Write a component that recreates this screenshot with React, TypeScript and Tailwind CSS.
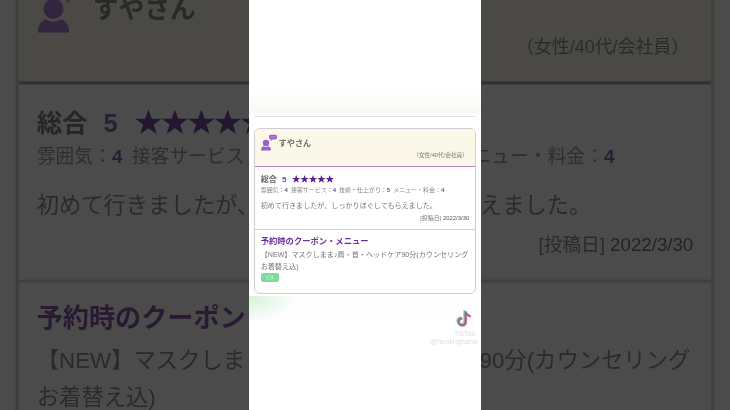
const details = [
  { label: "雰囲気", score: 4 },
  { label: "接客サービス", score: 4 },
  { label: "技術・仕上がり", score: 5 },
  { label: "メニュー・料金", score: 4 },
];

function UserIcon() {
  return (
    <svg className="w-4 h-[17px] shrink-0" viewBox="0 0 16 17" fill="#9d5fcb">
      <circle cx="5" cy="9" r="3.2" />
      <path d="M0 16.500c0-2.500 1.200-3.700 2.600-4.200 1.500 1 3.300 1 4.800 0C8.800 12.800 10 14 10 16.500z" />
      <path d="M9.500.8h4.500c1.200 0 2 .7 2 1.800v1c0 1.100-.8 1.800-2 1.800h-2.600L9 7.200l.6-2C8.500 4.900 8 4.400 8 3.600v-1C8 1.500 8.500.8 9.500.8z" />
      <path d="M9.700 3h.8M11.600 3h.8M13.500 3h.8" stroke="#fff" strokeWidth=".8" />
    </svg>
  );
}

function Stars() {
  return (
    <svg className="w-[42px] h-2 mb-[1px]" viewBox="0 0 50 10" preserveAspectRatio="none" fill="#5c1f90">
      {[0, 1, 2, 3, 4].map((i) => (
        <path key={i} transform={`translate(${i * 10} 0)`} d="M5 0l1.250 3.600h3.750L7 5.900 8.100 9.700 5 7.400 1.900 9.700 3 5.900 0 3.600h3.750z" />
      ))}
    </svg>
  );
}

function Review() {
  return (
    <div className="w-[222px] h-[166px] border border-[#cfcdcf] rounded-[6px] overflow-hidden bg-white text-[#777]">
      {/* Reviewer */}
      <div className="h-[38px] bg-[#fbf8e9] border-b border-[#b184bb] pl-[6px] pr-[7px] pt-[5px]">
        <div className="flex items-start h-[17px]">
          <UserIcon />
          <span className="ml-[1.5px] pt-[3.600px] text-[8.200px] leading-[11px] font-bold text-[#73716b]">すやさん</span>
        </div>
        <p className="-mt-[0.2px] text-right text-[5.700px] leading-[8px]">（女性/40代/会社員）</p>
      </div>

      {/* Scores */}
      <div className="h-[63px] border-b border-[#d0d0d0] px-[5.700px] pt-[7.600px]">
        <div className="flex items-center h-[10px] text-[8.100px] leading-[10px] font-bold text-[#666]">
          総合
          <span className="ml-[5px] mr-[5.500px] text-[#793fac]">5</span>
          <Stars />
        </div>
        <div className="flex gap-[3px] mt-[1.100px] text-[5.970px] leading-[8px] whitespace-nowrap text-[#888]">
          {details.map((d) => (
            <span key={d.label}>{d.label}：<b className="text-[#684b88]">{d.score}</b></span>
          ))}
        </div>
        <p className="mt-[7.300px] text-[7.080px] leading-[10px] whitespace-nowrap">初めて行きましたが、しっかりほぐしてもらえました。</p>
        <p className="mt-[3.300px] text-right text-[5.950px] leading-[8px]">[投稿日] <span className="text-[#555]">2022/3/30</span></p>
      </div>

      {/* Coupon */}
      <div className="px-[5.700px] pt-[6px]">
        <h3 className="text-[8.300px] leading-[10px] font-bold text-[#6d2f9d] whitespace-nowrap">予約時のクーポン・メニュー</h3>
        <p className="mt-[4.400px] text-[7.100px] leading-[11.200px] whitespace-nowrap">【NEW】マスクしまま♪肩・首・ヘッドケア90分(カウンセリング<br />お着替え込)</p>
        <span className="flex items-center justify-center w-[18px] h-[9.500px] rounded-[2px] bg-[#7bdc9d] text-[5px] leading-none text-[#d5f8df]">ﾘﾗｸ</span>
      </div>
    </div>
  );
}

function TikTokMark() {
  const note = "M8 1v10.500a3.500 3.500 0 1 1-3.500-3.500M8 1c.4 3 2 4.500 5 4.700";
  return (
    <svg className="w-4 h-[18px]" viewBox="0 0 16 18" fill="none" strokeWidth="2.2">
      <path d={note} stroke="#8fe3e1" transform="translate(.2 .2)" />
      <path d={note} stroke="#dc6c98" transform="translate(2 1.700)" />
      <path d={note} stroke="#77717f" strokeWidth="1.400" transform="translate(1.200 1)" />
    </svg>
  );
}

export default function App() {
  return (
    <div className="relative w-[730px] h-[410px] overflow-hidden bg-[#4b4b4b] font-['Liberation_Sans','Noto_Sans_CJK_JP',sans-serif]">
      {/* Enlarged, dimmed backdrop */}
      <div className="absolute left-[254px] top-[127.300px] origin-[111px_77px] scale-[3.147] blur-[0.25px] brightness-[.295] opacity-80">
        <Review />
      </div>

      <main className="absolute left-[249px] top-0 w-[232px] h-[410px] bg-white">
        <div className="h-[91px]" />
        <div className="h-[23px] bg-linear-to-b from-white to-[#f9f8f3]" />
        <div className="mx-[5px] h-[3px] border-b border-[#dfe0dc] rounded-b-[4px]" />
        <div className="pt-[11px] pl-[5px] blur-[0.3px]">
          <Review />
        </div>
        <div className="mt-[2px] h-[25px] bg-[radial-gradient(ellipse_45px_24px_at_0%_10%,#d8f2da,#fdfdfd)]" />
        <div className="flex flex-col items-end pr-[4px] -mt-[12px] blur-[0.3px]">
          <div className="pr-[5px]"><TikTokMark /></div>
          <span className="mt-[3px] text-[7px] leading-[8px] font-bold text-[#ebe5ea] pr-[1px]">TikTok</span>
          <span className="text-[7.300px] leading-[8px] text-[#dedede]">@healinghaha</span>
        </div>
      </main>
    </div>
  );
}
